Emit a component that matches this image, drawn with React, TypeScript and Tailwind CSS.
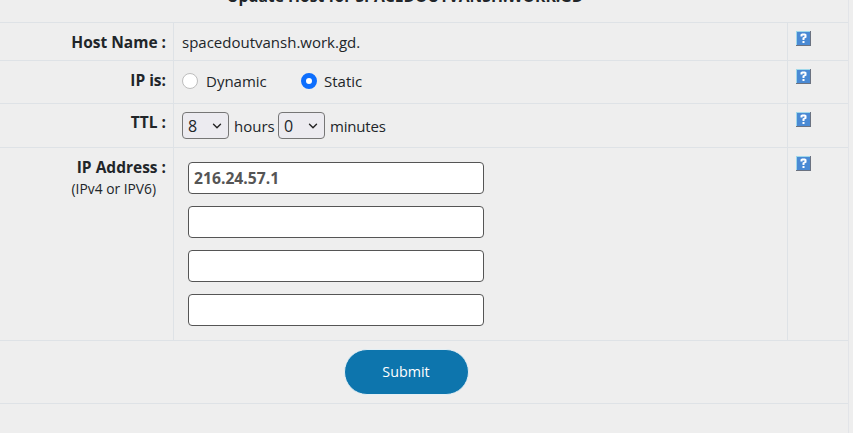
import { ChevronDown } from "lucide-react";

const help = (
  <svg width="15" height="15" viewBox="0 0 15 15" className="block">
    <rect x="0" y="0" width="15" height="15" fill="#6b7280" />
    <rect x="0" y="0" width="14" height="14" fill="#9fd8ea" />
    <rect x="1" y="1" width="13" height="13" fill="#4a8ad4" />
    <path d="M4.5 5.5 V3.5 L6 2.5 H9 L10.5 3.5 V6.5 L8.5 7.5 V9 H6.5 V6.8 L8.5 5.6 V4.4 H6.5 V5.5 Z" fill="#fff" />
    <rect x="6.5" y="10" width="2" height="2" fill="#fff" />
  </svg>
);

function Row({ label, sub, h, labelClass, children }: { label: string; sub?: string; h: string; labelClass?: string; children: React.ReactNode }) {
  return (
    <div className={`flex border-b border-[#dee2e6] ${h}`}>
      <div className={`w-[173px] shrink-0 pr-[7px] text-right ${labelClass ?? ""}`}>
        <div className="text-[15.5px] font-bold text-[#212529]">{label}</div>
        {sub && <div className="mt-[1px] pr-[10px] text-[13.8px] leading-[20px] text-[#212529]">{sub}</div>}
      </div>
      <div className="flex-1 border-l border-[#dee2e6] pl-2">{children}</div>
      <div className="w-[61px] shrink-0 border-l border-[#dee2e6] pl-[8px] pt-[8px]">{help}</div>
    </div>
  );
}

function Select({ value }: { value: string }) {
  return (
    <div className="relative h-[27px] w-[47px]">
      <select
        defaultValue={value}
        className="h-full w-full appearance-none rounded-[4px] border border-[#767676] bg-[#ecebf0] pl-[5px] text-[16px] text-[#212529] outline-none"
      >
        <option>{value}</option>
      </select>
      <ChevronDown size={14} strokeWidth={2.4} className="pointer-events-none absolute right-[5px] top-[7px] text-[#222]" />
    </div>
  );
}

const inputCls = "h-[32px] w-[296px] rounded-[4px] border border-[#555] bg-white px-[5px] text-[15.7px] font-bold text-[#555] outline-none";
const radioCls = "m-0 h-4 w-4 appearance-none rounded-full border border-[#bdbdbd] bg-white checked:border-[5px] checked:border-[#0d6efd]";

export default function App() {
  return (
    <div className="h-[433px] w-[853px] overflow-hidden bg-[#eeeeee] font-['Open_Sans','Noto_Sans',sans-serif] text-[15px] leading-[22px] text-[#212529]">
      <div className="h-[433px] w-[849px] border-r border-[#e2e4e8]">
        <div className="flex h-[23px] items-end justify-center overflow-hidden border-b border-[#dee2e6] pr-[38px]">
          <div className="mb-[15px] whitespace-nowrap text-[15.7px] font-bold">Update Host for SPACEDOUTVANSH.WORK.GD</div>
        </div>
        <Row label="Host Name :" h="h-[38px]" labelClass="pt-[8px]">
          <div className="pt-[8px]">spacedoutvansh.work.gd.</div>
        </Row>
        <Row label="IP is:" h="h-[43px]" labelClass="pt-[8px]">
          <div className="flex items-center pt-[9px]">
            <input type="radio" name="ip" readOnly className={radioCls} />
            <span className="ml-2 w-[95px]">Dynamic</span>
            <input type="radio" name="ip" readOnly defaultChecked className={radioCls} />
            <span className="ml-[7px]">Static</span>
          </div>
        </Row>
        <Row label="TTL :" h="h-[44px]" labelClass="pt-[7px]">
          <div className="flex items-center pt-[8px]">
            <Select value="8" />
            <span className="ml-[5px] w-[44px]">hours</span>
            <Select value="0" />
            <span className="ml-[5px] tracking-[-0.2px]">minutes</span>
          </div>
        </Row>
        <Row label="IP Address :" sub="(IPv4 or IPV6)" h="h-[193px]" labelClass="pt-[8px]">
          <div className="flex flex-col gap-3 pl-[6px] pt-[14px]">
            <input className={inputCls} defaultValue="216.24.57.1" />
            <input className={inputCls} />
            <input className={inputCls} />
            <input className={inputCls} />
          </div>
        </Row>
        <div className="flex h-[63px] items-start justify-center border-b border-[#dee2e6] pt-[8px] pr-[36px]">
          <button className="h-[46px] w-[125px] rounded-full border border-[#e3eff5] bg-[#0d75ad] text-[14.3px] text-white">Submit</button>
        </div>
      </div>
    </div>
  );
}
